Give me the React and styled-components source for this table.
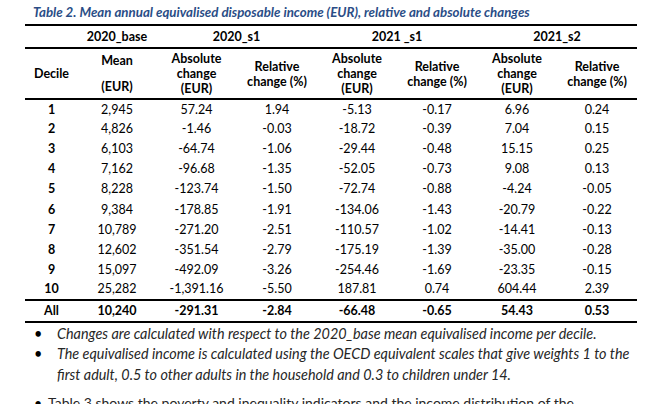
import React from 'react';
import styled, { createGlobalStyle } from 'styled-components';

const rows = [
  ['1', '2,945', '57.24', '1.94', '-5.13', '-0.17', '6.96', '0.24'],
  ['2', '4,826', '-1.46', '-0.03', '-18.72', '-0.39', '7.04', '0.15'],
  ['3', '6,103', '-64.74', '-1.06', '-29.44', '-0.48', '15.15', '0.25'],
  ['4', '7,162', '-96.68', '-1.35', '-52.05', '-0.73', '9.08', '0.13'],
  ['5', '8,228', '-123.74', '-1.50', '-72.74', '-0.88', '-4.24', '-0.05'],
  ['6', '9,384', '-178.85', '-1.91', '-134.06', '-1.43', '-20.79', '-0.22'],
  ['7', '10,789', '-271.20', '-2.51', '-110.57', '-1.02', '-14.41', '-0.13'],
  ['8', '12,602', '-351.54', '-2.79', '-175.19', '-1.39', '-35.00', '-0.28'],
  ['9', '15,097', '-492.09', '-3.26', '-254.46', '-1.69', '-23.35', '-0.15'],
  ['10', '25,282', '-1,391.16', '-5.50', '187.81', '0.74', '604.44', '2.39'],
];

const total = ['All', '10,240', '-291.31', '-2.84', '-66.48', '-0.65', '54.43', '0.53'];

const widths = [53, 78, 81, 80, 80, 80, 80, 80];

export default function App() {
  return (
    <>
      <GlobalStyle />
      <Page>
        <Title>Table 2. Mean annual equivalised disposable income (EUR), relative and absolute changes</Title>

        <Table>
          <colgroup>
            {widths.map((w, i) => (
              <col key={i} style={{ width: w }} />
            ))}
          </colgroup>
          <thead>
            <GroupRow>
              <th />
              <th>2020_base</th>
              <th colSpan={2}>2020_s1</th>
              <th colSpan={2}>2021 _s1</th>
              <th colSpan={2}>2021_s2</th>
            </GroupRow>
            <HeadRow>
              <th>Decile</th>
              <th>
                <Stack $gap={11}>
                  <span>Mean</span>
                  <span>(EUR)</span>
                </Stack>
              </th>
              <th>Absolute<br />change<br />(EUR)</th>
              <th>Relative<br />change (%)</th>
              <th>Absolute<br />change<br />(EUR)</th>
              <th>Relative<br />change (%)</th>
              <th>Absolute<br />change<br />(EUR)</th>
              <th>Relative<br />change (%)</th>
            </HeadRow>
          </thead>
          <tbody>
            {rows.map((r) => (
              <DataRow key={r[0]}>
                {r.map((v, i) => (
                  <Cell key={i} $bold={i === 0}>{v}</Cell>
                ))}
              </DataRow>
            ))}
            <TotalRow>
              {total.map((v, i) => (
                <Cell key={i} $bold>{v}</Cell>
              ))}
            </TotalRow>
          </tbody>
        </Table>

        <Notes>
          <Note>
            <Bullet>•</Bullet>
            <NoteText>Changes are calculated with respect to the 2020_base mean equivalised income per decile.</NoteText>
          </Note>
          <Note>
            <Bullet>•</Bullet>
            <NoteText>
              The equivalised income is calculated using the OECD equivalent scales that give weights 1 to the
              first adult, 0.5 to other adults in the household and 0.3 to children under 14.
            </NoteText>
          </Note>
        </Notes>

        <Paragraph>
          <Bullet $small>•</Bullet>
          <span>Table 3 shows the poverty and inequality indicators and the income distribution of the</span>
        </Paragraph>
      </Page>
    </>
  );
}

const GlobalStyle = createGlobalStyle`
  html, body {
    margin: 0;
    padding: 0;
    background: #ffffff;
    height: 404px;
    overflow: hidden;
  }
  body {
    font-family: Lato, "Liberation Sans", sans-serif;
    color: #000000;
  }
`;

const Page = styled.div`
  width: 669px;
  height: 404px;
  padding: 4px 0 0 25px;
  box-sizing: border-box;
  overflow: hidden;
`;

const Title = styled.div`
  padding-left: 8px;
  height: 20px;
  font-size: 13.3px;
  font-weight: bold;
  font-style: italic;
  color: #2a4d86;
  white-space: nowrap;
  line-height: 17px;
`;

const Table = styled.table`
  width: 612px;
  table-layout: fixed;
  border-collapse: collapse;
  font-size: 12.5px;
  border-top: 2px solid #000;

  th {
    font-weight: bold;
    text-align: center;
    padding: 0;
  }
`;

const GroupRow = styled.tr`
  height: 23px;
  border-bottom: 2px solid #000;

  th {
    line-height: 16px;
    vertical-align: middle;
  }
`;

const HeadRow = styled.tr`
  height: 51px;
  border-bottom: 2px solid #000;

  th {
    line-height: 15px;
    vertical-align: middle;
  }
`;

const Stack = styled.span`
  display: flex;
  flex-direction: column;
  align-items: center;
  gap: ${(p) => p.$gap}px;
`;

const DataRow = styled.tr`
  height: 20.1px;

  &:last-of-type {
    border-bottom: 2px solid #000;
  }
`;

const TotalRow = styled.tr`
  height: 22px;
  border-top: 2px solid #000;
  border-bottom: 2px solid #000;
`;

const Cell = styled.td`
  padding: 0;
  text-align: center;
  vertical-align: middle;
  line-height: 16px;
  font-weight: ${(p) => (p.$bold ? 'bold' : 'normal')};
`;

const Notes = styled.div`
  margin-top: 1px;
  width: 612px;
  display: flex;
  flex-direction: column;
`;

const Note = styled.div`
  display: flex;
  align-items: flex-start;
  font-size: 14.4px;
  line-height: 20.5px;
  color: #262626;
`;

const Bullet = styled.span`
  flex: none;
  width: ${(p) => (p.$small ? 23 : 32)}px;
  padding-left: 9px;
  box-sizing: border-box;
  font-style: normal;
  color: #000;
`;

const NoteText = styled.span`
  font-style: italic;
`;

const Paragraph = styled.div`
  display: flex;
  margin-top: 8px;
  font-size: 14px;
  line-height: 20px;
  color: #262626;
  white-space: nowrap;
`;
